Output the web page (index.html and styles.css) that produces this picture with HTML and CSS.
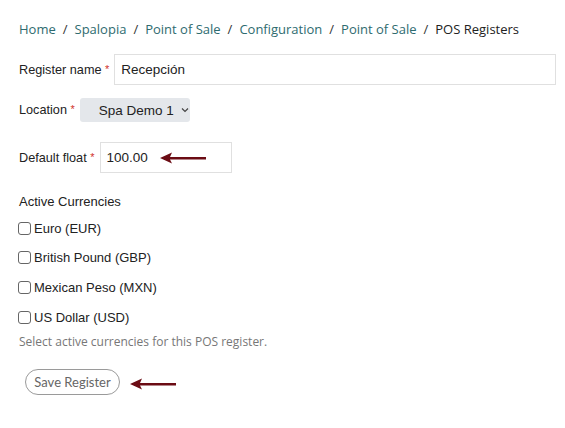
FILE: index.html
```html
<!DOCTYPE html>
<html>
<head>
<meta charset="utf-8">
<link rel="stylesheet" href="styles.css">
</head>
<body>
<div class="page">
  <nav class="crumbs">
    <a>Home</a><span class="sep">/</span><a>Spalopia</a><span class="sep">/</span><a>Point of Sale</a><span class="sep">/</span><a>Configuration</a><span class="sep">/</span><a>Point of Sale</a><span class="sep">/</span><span class="current">POS Registers</span>
  </nav>

  <div class="row row-name">
    <label class="lbl">Register name <span class="req">*</span></label>
    <div class="input wide">Recepción</div>
  </div>

  <div class="row row-loc">
    <label class="lbl">Location <span class="req">*</span></label>
    <div class="select">Spa Demo 1
      <svg class="chev" width="8" height="6" viewBox="0 0 8 6"><path d="M1 1.5 L4 4.5 L7 1.5" fill="none" stroke="#444" stroke-width="1.2"/></svg>
    </div>
  </div>

  <div class="row row-float">
    <label class="lbl">Default float <span class="req">*</span></label>
    <div class="input small">100.00
      <svg class="arrow arrow-float" width="46" height="12" viewBox="0 0 46 12"><path d="M0 6 L12 0.5 L10 5 L46 5 L46 7.5 L10 7.5 L12 11.5 Z" fill="#6b0c14"/></svg>
    </div>
  </div>

  <div class="group-title">Active Currencies</div>
  <div class="checks">
    <label class="check"><span class="box"></span>Euro (EUR)</label>
    <label class="check"><span class="box"></span>British Pound (GBP)</label>
    <label class="check"><span class="box"></span>Mexican Peso (MXN)</label>
    <label class="check"><span class="box"></span>US Dollar (USD)</label>
  </div>
  <p class="help">Select active currencies for this POS register.</p>

  <div class="actions">
    <button class="btn">Save Register</button>
    <svg class="arrow" width="46" height="12" viewBox="0 0 46 12"><path d="M0 6 L12 0.5 L10 5 L46 5 L46 7.5 L10 7.5 L12 11.5 Z" fill="#6b0c14"/></svg>
  </div>
</div>
</body>
</html>
```

FILE: styles.css
```css
html, body {
  margin: 0;
  padding: 0;
  background: #fff;
}
.page {
  padding: 19px 10px 0 19px;
  font-family: "Liberation Sans", Arial, sans-serif;
  font-size: 12.7px;
  color: #222;
  white-space: nowrap;
}
.crumbs {
  font-family: "Open Sans", sans-serif;
  font-size: 13px;
  line-height: 20px;
  color: #2e6b6f;
  display: flex;
  align-items: center;
}
.crumbs > * {
  flex-shrink: 0;
}
.crumbs .sep {
  color: #333;
  margin: 0 7px;
}
.crumbs .current {
  color: #222;
}
.row {
  display: flex;
  align-items: center;
}
.row > * {
  flex-shrink: 0;
}
.row-name {
  margin-top: 15px;
}
.row-loc {
  margin-top: 13px;
}
.row-float {
  margin-top: 20px;
}
.lbl {
  margin-right: 5px;
}
.req {
  color: #d0312d;
  font-size: 11px;
  vertical-align: 1px;
}
.input {
  box-sizing: border-box;
  border: 1px solid #e0e0e0;
  height: 31px;
  display: flex;
  align-items: center;
  padding-left: 6px;
  font-size: 13.5px;
  color: #222;
}
.input.wide {
  width: 442px;
}
.input.small {
  width: 132px;
  height: 31px;
  position: relative;
}
.arrow-float {
  position: absolute;
  left: 59px;
  top: 9px;
}
.select {
  box-sizing: border-box;
  background: #e4e7eb;
  border-radius: 3px;
  height: 24px;
  width: 110px;
  padding-left: 19px;
  display: flex;
  align-items: center;
  font-size: 13.5px;
  color: #222;
}
.chev {
  margin-left: 7px;
}
.group-title {
  margin-top: 21px;
  font-size: 13px;
  line-height: 16px;
}
.checks {
  display: flex;
  flex-direction: column;
  gap: 13.7px;
  margin-top: 10px;
}
.check {
  display: flex;
  align-items: center;
  font-size: 13px;
  height: 16px;
}
.box {
  box-sizing: border-box;
  width: 13px;
  height: 13px;
  border: 1px solid #666;
  border-radius: 3px;
  margin: 0 3px 0 -1px;
}
.help {
  font-family: "Open Sans", sans-serif;
  font-size: 12px;
  color: #777;
  margin: 8px 0 0 0;
  line-height: 18px;
}
.actions {
  margin-top: 18px;
  padding-left: 6px;
  display: flex;
  align-items: center;
  gap: 10px;
}
.btn {
  box-sizing: border-box;
  height: 26px;
  width: 95px;
  border: 1px solid #9a9a9a;
  border-radius: 13px;
  background: #fff;
  font-family: "Lato", sans-serif;
  font-size: 13px;
  color: #666;
  padding: 0;
}
.actions .arrow {
  margin-top: 4px;
}
```
